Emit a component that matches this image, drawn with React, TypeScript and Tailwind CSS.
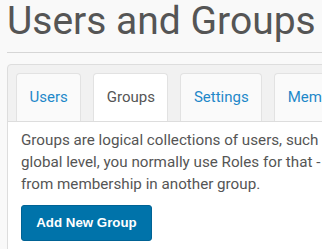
import React from 'react';

const tabs = [
    { label: 'Users', active: false },
    { label: 'Groups', active: true },
    { label: 'Settings', active: false },
    { label: 'Membership', active: false },
];

const lines = [
    'Groups are logical collections of users, such as teams or departments that share access to resources at the',
    'global level, you normally use Roles for that - but a group may also inherit its rights',
    'from membership in another group.',
];

const App = () => {
    return (
        <div className="w-[322px] h-[249px] overflow-hidden bg-[#f9f9f9] font-['Roboto',sans-serif]">
            <div className="pl-[7px] w-[900px]">
                {/* Page title */}
                <h1 className="pt-[2px] text-[39px] leading-[38px] text-[#555] font-normal whitespace-nowrap">
                    Users and Groups
                </h1>
                <div className="mt-[12px] border-t border-[#d6d6d6]" />

                {/* Tab panel */}
                <div className="mt-[11px] border border-[#dddddd] rounded-[4px] bg-[#f1f1f1]">
                    <div className="flex gap-[12px] px-[8px] pt-[8px] border-b border-[#dddddd]">
                        {tabs.map((tab) => (
                            <div
                                key={tab.label}
                                className={`h-[48px] px-[12.5px] flex items-center border border-b-0 border-[#e2e2e2] rounded-t-[4px] text-[15px] ${tab.active ? 'bg-white text-[#555]' : 'bg-[#fafafa] text-[#1e88c9]'}`}
                            >
                                {tab.label}
                            </div>
                        ))}
                    </div>

                    <div className="bg-white pl-[13px] pt-[7px] pb-[20px]">
                        <p className="text-[15.2px] leading-[22px] text-[#555]">
                            {lines.map((line) => (
                                <span key={line} className="block whitespace-nowrap">{line}</span>
                            ))}
                        </p>
                        <button className="mt-[10px] h-[36px] w-[131px] bg-[#0073aa] border border-[#006395] rounded-[3px] text-white font-bold text-[13.3px] font-['Liberation_Sans',Arial,sans-serif]">
                            Add New Group
                        </button>
                    </div>
                </div>
            </div>
        </div>
    );
};

export default App;
